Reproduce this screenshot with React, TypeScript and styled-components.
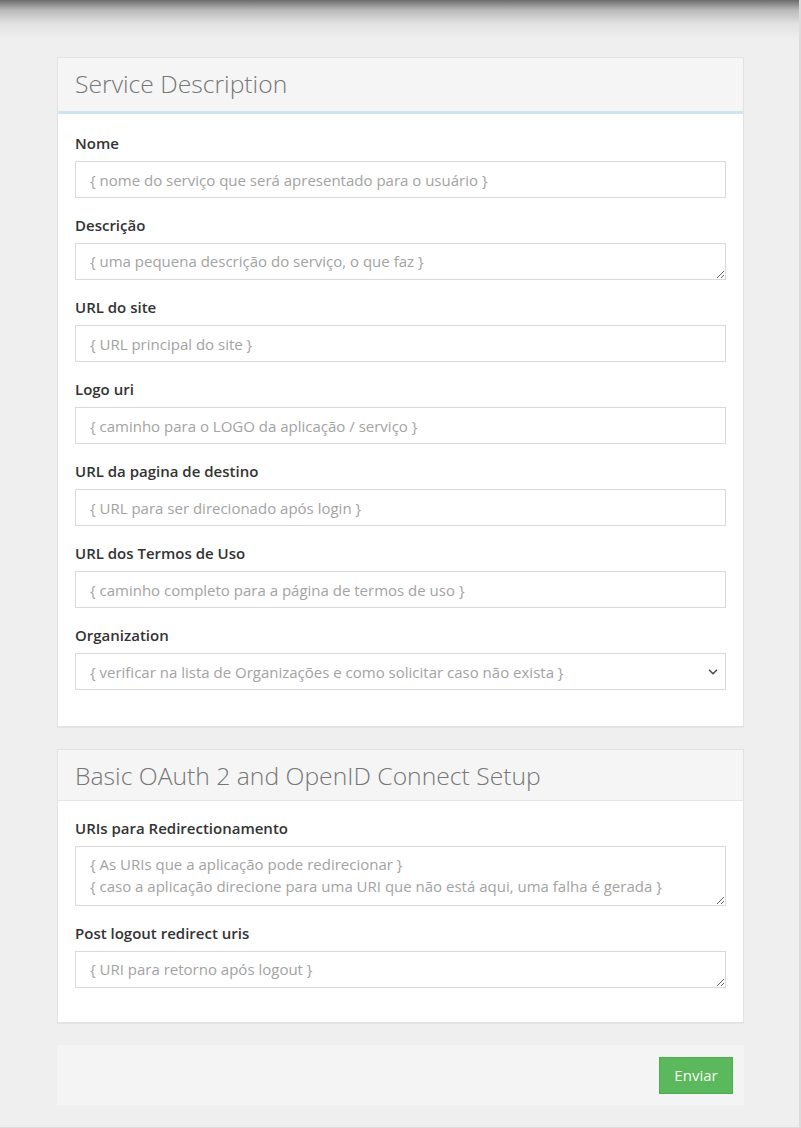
import React from 'react';
import styled, { createGlobalStyle } from 'styled-components';
import { ChevronDown } from 'lucide-react';

const GlobalStyle = createGlobalStyle`
    html, body { margin: 0; padding: 0; }
    body {
        font-family: "Open Sans", "Liberation Sans", sans-serif;
        background: #efefef;
        color: #333;
    }
`;

const Page = styled.div`
    min-height: 1128px;
    box-sizing: border-box;
    padding: 57px 57px 24px;
    display: flex;
    flex-direction: column;
    gap: 22px;
    background: linear-gradient(to bottom, #6c6c6c 0px, #b9b9b9 10px, #e2e2e2 24px, #efefef 40px, #efefef 100%);
    box-shadow: inset -2px -2px 0 #dcdcdc;
`;

const Card = styled.section`
    background: #fff;
    border: 1px solid #e2e2e2;
    box-shadow: 0 1px 1px rgba(0, 0, 0, 0.04);
`;

const CardHeader = styled.header<{ $accent?: boolean; $height: number }>`
    height: ${p => p.$height}px;
    box-sizing: border-box;
    display: flex;
    align-items: center;
    padding: 0 17px ${p => (p.$accent ? 2 : 0)}px;
    background: #f5f5f5;
    border-bottom: ${p => (p.$accent ? '3px solid #cde6ed' : '1px solid #e6e6e6')};
`;

const Title = styled.h2`
    margin: 0;
    font-size: 24.7px;
    font-weight: 300;
    color: #777;
`;

const CardBody = styled.div<{ $top: number; $bottom: number }>`
    padding: ${p => p.$top}px 17px ${p => p.$bottom}px;
    display: flex;
    flex-direction: column;
    gap: 17px;
`;

const Field = styled.div`
    display: flex;
    flex-direction: column;
    gap: 8px;
`;

const Label = styled.label`
    font-size: 15px;
    font-weight: 600;
    line-height: 20px;
    color: #333;
`;

const controlBase = `
    box-sizing: border-box;
    width: 100%;
    border: 1px solid #dadada;
    background: #fff;
    font-family: "Open Sans", "Liberation Sans", sans-serif;
    font-size: 15px;
    color: #555;
    padding: 6px 14px;
    outline: none;
    border-radius: 0;
    &::placeholder { color: #a3a3a3; opacity: 1; }
`;

const Input = styled.input`
    ${controlBase}
    height: 37px;
`;

const TextArea = styled.textarea<{ $height: number }>`
    ${controlBase}
    height: ${p => p.$height}px;
    line-height: 22px;
    padding-top: 6px;
    resize: vertical;
    display: block;
`;

const SelectWrap = styled.div`
    position: relative;
`;

const Select = styled.select`
    ${controlBase}
    height: 37px;
    appearance: none;
    color: #a3a3a3;
    padding-right: 32px;
`;

const Chevron = styled(ChevronDown)`
    position: absolute;
    right: 6px;
    top: 12px;
    color: #555;
    pointer-events: none;
`;

const Footer = styled.div`
    height: 60px;
    box-sizing: border-box;
    background: #f4f4f4;
    display: flex;
    align-items: center;
    justify-content: flex-end;
    padding: 0 11px;
`;

const SubmitButton = styled.button`
    height: 37px;
    width: 74px;
    border: 1px solid #4cae4c;
    background: #5cb85c;
    color: #f4fff2;
    font-family: "Open Sans", "Liberation Sans", sans-serif;
    font-size: 15px;
    font-weight: 500;
    cursor: pointer;
`;

const serviceFields: { label: string; placeholder: string; kind: 'input' | 'textarea' }[] = [
    { label: 'Nome', placeholder: '{ nome do serviço que será apresentado para o usuário }', kind: 'input' },
    { label: 'Descrição', placeholder: '{ uma pequena descrição do serviço, o que faz }', kind: 'textarea' },
    { label: 'URL do site', placeholder: '{ URL principal do site }', kind: 'input' },
    { label: 'Logo uri', placeholder: '{ caminho para o LOGO da aplicação / serviço }', kind: 'input' },
    { label: 'URL da pagina de destino', placeholder: '{ URL para ser direcionado após login }', kind: 'input' },
    { label: 'URL dos Termos de Uso', placeholder: '{ caminho completo para a página de termos de uso }', kind: 'input' },
];

export default function App() {
    return (
        <>
            <GlobalStyle />
            <Page>
                <Card>
                    <CardHeader $accent $height={56}>
                        <Title>Service Description</Title>
                    </CardHeader>
                    <CardBody $top={19} $bottom={36}>
                        {serviceFields.map(f => (
                            <Field key={f.label}>
                                <Label>{f.label}</Label>
                                {f.kind === 'input'
                                    ? <Input placeholder={f.placeholder} />
                                    : <TextArea $height={37} placeholder={f.placeholder} />}
                            </Field>
                        ))}
                        <Field>
                            <Label>Organization</Label>
                            <SelectWrap>
                                <Select defaultValue="">
                                    <option value="">{'{ verificar na lista de Organizações e como solicitar caso não exista }'}</option>
                                </Select>
                                <Chevron size={14} strokeWidth={3} />
                            </SelectWrap>
                        </Field>
                    </CardBody>
                </Card>

                <Card>
                    <CardHeader $height={51}>
                        <Title>Basic OAuth 2 and OpenID Connect Setup</Title>
                    </CardHeader>
                    <CardBody $top={17} $bottom={34}>
                        <Field>
                            <Label>URIs para Redirectionamento</Label>
                            <TextArea
                                $height={60}
                                placeholder={'{ As URIs que a aplicação pode redirecionar }\n{ caso a aplicação direcione para uma URI que não está aqui, uma falha é gerada }'}
                            />
                        </Field>
                        <Field>
                            <Label>Post logout redirect uris</Label>
                            <TextArea $height={37} placeholder="{ URI para retorno após logout }" />
                        </Field>
                    </CardBody>
                </Card>

                <Footer>
                    <SubmitButton type="submit">Enviar</SubmitButton>
                </Footer>
            </Page>
        </>
    );
}
